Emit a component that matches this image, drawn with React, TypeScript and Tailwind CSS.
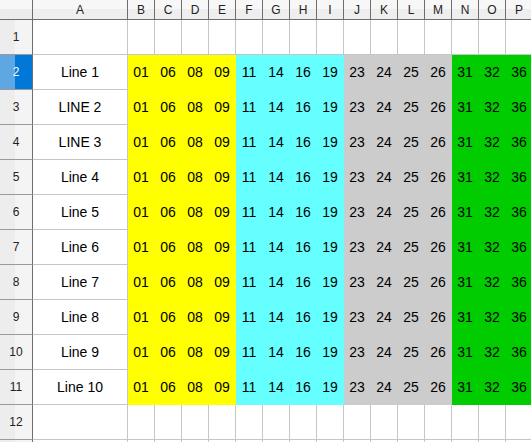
import React from "react";

const cols = ["B","C","D","E","F","G","H","I","J","K","L","M","N","O","P"];
const nums = ["01","06","08","09","11","14","16","19","23","24","25","26","31","32","36"];
const bgs = [
  "bg-[#ffff00] border-[#ffff00]","bg-[#ffff00] border-[#ffff00]","bg-[#ffff00] border-[#ffff00]","bg-[#ffff00] border-[#ffff00]",
  "bg-[#66ffff] border-[#66ffff]","bg-[#66ffff] border-[#66ffff]","bg-[#66ffff] border-[#66ffff]","bg-[#66ffff] border-[#66ffff]",
  "bg-[#cccccc] border-[#cccccc]","bg-[#cccccc] border-[#cccccc]","bg-[#cccccc] border-[#cccccc]","bg-[#cccccc] border-[#cccccc]",
  "bg-[#00cc00] border-[#00cc00]","bg-[#00cc00] border-[#00cc00]","bg-[#00cc00] border-[#00cc00]",
];
const labels = ["Line 1","LINE 2","LINE 3","Line 4","Line 5","Line 6","Line 7","Line 8","Line 9","Line 10"];

const rowHead = "h-[35px] flex items-center justify-center border-r border-b border-r-[#6e6e6e] border-b-[#9a9a9a] text-[12px] text-[#222] bg-[linear-gradient(to_right,#ededed_48%,#f4f4f4_48%)]";
const cell = "h-[35px] border-r border-b border-[#c6c6c6] bg-white";

export default function App() {
  const rows = [] as React.ReactNode[];
  rows.push(
    <React.Fragment key="r1">
      <div className={rowHead}>1</div>
      <div className={cell} />
      {cols.map((c) => <div key={c} className={cell} />)}
    </React.Fragment>
  );
  labels.forEach((l, i) => {
    const n = i + 2;
    rows.push(
      <React.Fragment key={"r" + n}>
        {n === 2 ? (
          <div className="h-[35px] flex items-center justify-center border-r border-b border-r-[#6e6e6e] border-b-[#9a9a9a] text-[12px] text-white bg-[linear-gradient(to_right,#5fa7e3_48%,#0078d7_48%)]">{n}</div>
        ) : (
          <div className={rowHead}>{n}</div>
        )}
        <div className={cell + " flex items-center justify-center text-[14px] text-black"}>{l}</div>
        {nums.map((v, j) => (
          <div key={j} className={"h-[35px] border-r border-b flex items-center justify-center text-[14px] text-black " + bgs[j]}>{v}</div>
        ))}
      </React.Fragment>
    );
  });
  rows.push(
    <React.Fragment key="r12">
      <div className={rowHead}>12</div>
      <div className={cell} />
      {cols.map((c) => <div key={c} className={cell} />)}
    </React.Fragment>
  );
  rows.push(
    <React.Fragment key="r13">
      <div className={rowHead} />
      <div className={cell} />
      {cols.map((c) => <div key={c} className={cell} />)}
    </React.Fragment>
  );

  return (
    <div className="w-[531px] h-[442px] overflow-hidden bg-white" style={{ fontFamily: '"Liberation Sans", Arial, sans-serif' }}>
      <div className="grid grid-cols-[33px_95px_repeat(15,27px)] w-max">
        <div className="h-[20px] border-r border-b border-[#6e6e6e] bg-[linear-gradient(to_bottom,#f7f7f7_50%,#ececec_50%)]" />
        {["A", ...cols].map((c) => (
          <div key={c} className="h-[20px] flex items-center justify-center border-r border-b border-[#6e6e6e] text-[12px] text-[#222] bg-[linear-gradient(to_bottom,#f7f7f7_50%,#eeeeee_50%)]">{c}</div>
        ))}
        {rows}
      </div>
    </div>
  );
}
